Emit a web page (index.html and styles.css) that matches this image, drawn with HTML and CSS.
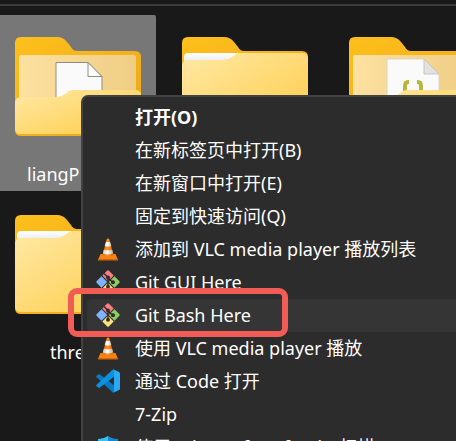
FILE: index.html
```html
<!DOCTYPE html>
<html lang="zh-CN">
<head>
<meta charset="utf-8">
<title>文件资源管理器</title>
<link rel="stylesheet" href="styles.css">
</head>
<body>
<svg class="defs" aria-hidden="true">
  <defs>
    <linearGradient id="back" x1="0" y1="0" x2="1" y2="1"><stop offset="0" stop-color="#ffc01c"/><stop offset="1" stop-color="#e9a51c"/></linearGradient>
    <linearGradient id="front" x1="0" y1="0" x2="1" y2="1"><stop offset="0" stop-color="#ffe9a6"/><stop offset="1" stop-color="#ffcb45"/></linearGradient>
    <linearGradient id="inner" x1="0" y1="0" x2="1" y2="0"><stop offset="0" stop-color="#fce1a0"/><stop offset="1" stop-color="#efcd84"/></linearGradient>
    <linearGradient id="sheet" x1="0" y1="0" x2="0" y2="1"><stop offset="0" stop-color="#fff"/><stop offset="1" stop-color="#dcdfe3"/></linearGradient>
    <linearGradient id="cone" x1="0" y1="0" x2="1" y2="0"><stop offset="0" stop-color="#e66a00"/><stop offset=".45" stop-color="#ff9418"/><stop offset="1" stop-color="#df5f00"/></linearGradient>
    <linearGradient id="band" x1="0" y1="0" x2="1" y2="0"><stop offset="0" stop-color="#c4c4c4"/><stop offset=".45" stop-color="#fff"/><stop offset="1" stop-color="#aaa"/></linearGradient>
  </defs>
  <symbol id="tab" viewBox="0 0 126 99">
    <path fill="url(#back)" d="M6 0H42Q48 0 52 5L56 10Q58 14 62 14H120Q126 14 126 20V93Q126 99 120 99H6Q0 99 0 93V6Q0 0 6 0Z"/>
  </symbol>
  <symbol id="folder" viewBox="0 0 126 99">
    <use href="#tab"/>
    <path fill="url(#sheet)" d="M6 16H56V30H2V20Q2 16 6 16Z"/>
    <path fill="url(#front)" d="M6 23H40Q46 23 50 20L54 17Q56 16 59 16H121Q126 16 126 22V92Q126 97 120 97H6Q0 97 0 92V29Q0 23 6 23Z"/>
  </symbol>
  <symbol id="open-back" viewBox="0 0 126 99">
    <use href="#tab"/>
    <path fill="url(#inner)" d="M6 18H119Q121 18 121 21V80H4V21Q4 18 6 18Z"/>
  </symbol>
  <symbol id="open-front" viewBox="0 0 126 99">
    <path fill="url(#front)" d="M6 60H40Q46 60 50 57L54 54Q56 53 59 53H121Q126 53 126 59V92Q126 97 120 97H6Q0 97 0 92V66Q0 60 6 60Z"/>
  </symbol>
  <symbol id="vlc" viewBox="0 0 24 24">
    <path fill="#f48413" d="M4.500 17H19.500L22 23H2Z"/>
    <path fill="#d46405" d="M2.300 22H21.700L22 23.500H2Z"/>
    <path fill="url(#cone)" d="M10.800 2Q12 .8 13.200 2L17.500 18Q12 21 6.500 18Z"/>
    <path fill="url(#band)" d="M9.900 5H14.100L15.300 9Q12 10 8.700 9ZM7.800 12.700Q12 14 16.200 12.700L17.200 16.400Q12 18.500 6.800 16.400Z"/>
  </symbol>
  <symbol id="git" viewBox="0 0 24 24">
    <path fill="#f78085" d="M11 .8Q12 -.2 13 .8L17.700 5.500L12 11.200L6.300 5.500Z"/>
    <path fill="#80b3ff" d="M5.500 6.300L11.200 12L5.500 17.700L.8 13Q-.2 12 .8 11Z"/>
    <path fill="#8ccf60" d="M18.500 6.300L23.200 11Q24.200 12 23.200 13L18.500 17.700L12.800 12Z"/>
    <path fill="#ffe07f" d="M12 12.800L17.700 18.500L13 23.200Q12 24.200 11 23.200L6.300 18.500Z"/>
    <path fill="none" stroke="#362b2b" stroke-width="1.500" d="M8 3.500L12 7.500V17M12 8L17 12.500"/>
    <circle cx="12" cy="7.500" r="2" fill="#362b2b"/><circle cx="12" cy="16.800" r="2" fill="#362b2b"/><circle cx="17" cy="12.300" r="2" fill="#362b2b"/>
  </symbol>
  <symbol id="code" viewBox="0 0 24 24">
    <path fill="#0879c4" d="M1.200 6.200L2.500 5.200Q3 4.900 3.600 5.300L18 16.300V23.500Q17 23.700 16.200 23L.4 8.100Q-.2 7.500.4 6.900Z"/>
    <path fill="#0b91df" d="M1.200 17.800L2.500 18.800Q3 19.100 3.600 18.700L18 7.700V.5Q17 .3 16.200 1L.4 15.900Q-.2 16.500.4 17.100Z"/>
    <path fill="#2aa9f5" d="M17.200 23.800Q18 22.700 18 21.800V2.200Q18 1.200 17.200.2L23 2.900Q24 3.400 24 4.500V19.500Q24 20.600 23 21.100Z"/>
  </symbol>
  <symbol id="shield" viewBox="0 0 24 24">
    <path fill="#1687d9" d="M12 1Q16 4 22 4V12Q22 20 12 24Q2 20 2 12V4Q8 4 12 1Z"/>
    <path fill="#35c1f1" d="M12 1Q8 4 2 4V12H12Z"/>
  </symbol>
</svg>

<main class="explorer">
  <div class="files">
    <div class="tile selected">
      <svg class="folder" viewBox="0 0 126 99" aria-hidden="true">
        <use href="#open-back"/>
        <path fill="#fafafa" stroke="#908b80" d="M41 70V25.500H73L87 39.500V70Z"/>
        <path fill="#fff" stroke="#908b80" d="M73 25.500V39.500H87Z"/>
        <use href="#open-front"/>
      </svg>
      <span class="name long">liangP</span>
    </div>
    <div class="tile">
      <svg class="folder" aria-hidden="true"><use href="#folder"/></svg>
    </div>
    <div class="tile">
      <svg class="folder" viewBox="0 0 126 99" aria-hidden="true">
        <use href="#open-back"/>
        <path fill="#fafafa" stroke="#ddd5c0" d="M38 70V22H75L90 37V70Z"/>
        <path fill="#e2e2e2" stroke="#c6c6c6" d="M75 22V37H90Z"/>
        <path fill="none" stroke="#b6b83c" stroke-width="4" d="M60 45H59Q56 45 56 49V60M68 45H69Q72 45 72 49V60"/>
        <use href="#open-front"/>
      </svg>
    </div>
    <div class="tile">
      <svg class="folder" aria-hidden="true"><use href="#folder"/></svg>
      <span class="name short">thre</span>
    </div>
  </div>

  <div class="menu" role="menu">
    <button class="item default" role="menuitem"><span class="icon"></span><span>打开(O)</span></button>
    <button class="item" role="menuitem"><span class="icon"></span><span>在新标签页中打开(B)</span></button>
    <button class="item" role="menuitem"><span class="icon"></span><span>在新窗口中打开(E)</span></button>
    <button class="item" role="menuitem"><span class="icon"></span><span>固定到快速访问(Q)</span></button>
    <button class="item" role="menuitem"><svg class="icon" aria-hidden="true"><use href="#vlc"/></svg><span>添加到 VLC media player 播放列表</span></button>
    <button class="item" role="menuitem"><svg class="icon" aria-hidden="true"><use href="#git"/></svg><span>Git GUI Here</span></button>
    <button class="item active" role="menuitem"><svg class="icon" aria-hidden="true"><use href="#git"/></svg><span>Git Bash Here</span></button>
    <button class="item" role="menuitem"><svg class="icon" aria-hidden="true"><use href="#vlc"/></svg><span>使用 VLC media player 播放</span></button>
    <button class="item" role="menuitem"><svg class="icon" aria-hidden="true"><use href="#code"/></svg><span>通过 Code 打开</span></button>
    <button class="item" role="menuitem"><span class="icon"></span><span>7-Zip</span></button>
    <button class="item" role="menuitem"><svg class="icon" aria-hidden="true"><use href="#shield"/></svg><span>使用 Microsoft Defender扫描...</span></button>
  </div>
  <div class="highlight"></div>
</main>
</body>
</html>
```
FILE: styles.css
```css
* { box-sizing: border-box; }

body {
  margin: 0;
  background: #191919;
  color: #fff;
  font: 18px/24px "Noto Sans", "Noto Sans CJK SC", sans-serif;
}

.defs {
  position: absolute;
  width: 0;
  height: 0;
}

.explorer {
  position: relative;
  height: 100vh;
  overflow: hidden;
  padding-top: 4px;
}

.files {
  display: grid;
  grid-template-columns: repeat(3, 156px);
  grid-auto-rows: 176px;
  gap: 2px 11px;
  padding-top: 9px;
  border-top: 2px solid #3c3c3c;
}

.tile {
  display: flex;
  flex-direction: column;
  padding-top: 22px;
}

.selected {
  background: #777;
  border-radius: 0 2px 2px 0;
}

.folder {
  width: 126px;
  height: 99px;
  margin: 0 15px;
}

.name {
  margin-top: 26px;
  white-space: nowrap;
}

.long { padding-left: 27px; }
.short { padding-left: 50px; }

.menu {
  position: absolute;
  top: 95px;
  left: 81px;
  right: -20px;
  padding: 4px;
  border: 2px solid #424242;
  border-radius: 7px;
  background: #2c2c2c;
}

.item {
  display: flex;
  align-items: center;
  gap: 15px;
  width: 100%;
  height: 33px;
  padding: 0 9px 2px;
  border: 0;
  border-radius: 4px;
  background: none;
  color: inherit;
  font: inherit;
  white-space: nowrap;
}

.default { font-weight: 700; }
.active { background: #353535; }

.icon {
  flex: none;
  width: 24px;
  height: 24px;
}

.highlight {
  position: absolute;
  top: 288px;
  left: 68px;
  width: 220px;
  height: 49px;
  border: 6px solid #f25c57;
  border-radius: 9px;
  pointer-events: none;
}
```
